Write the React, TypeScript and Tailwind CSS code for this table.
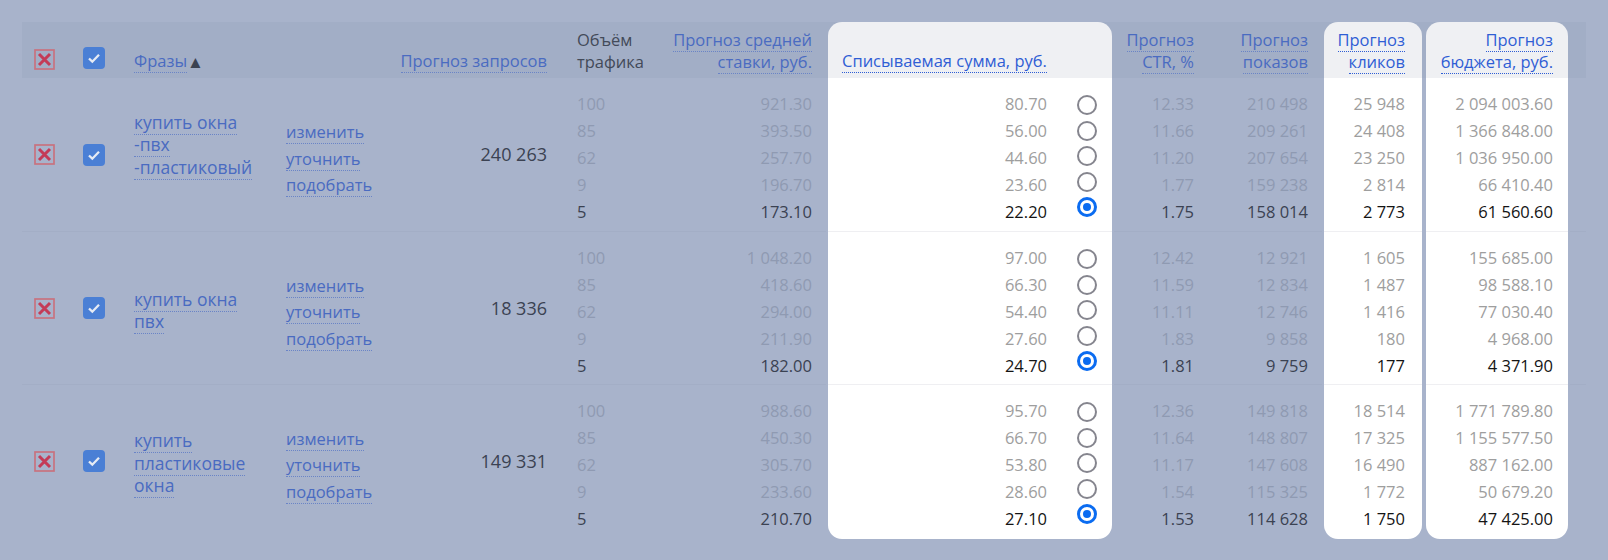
import React from "react";

const GRID =
  "grid grid-cols-[48px_52px_152px_126px_165px_75px_186px_288px_92px_116px_102px_146px_16px]";

type Row = {
  phrase: string[];
  shift: string;
  requests: string;
  bid: string[];
  charge: string[];
  ctr: string[];
  shows: string[];
  clicks: string[];
  budget: string[];
};

const volume = ["100", "85", "62", "9", "5"];

const rows: Row[] = [
  {
    phrase: ["купить окна", "-пвх", "-пластиковый"],
    shift: "pb-[20px]",
    requests: "240 263",
    bid: ["921.30", "393.50", "257.70", "196.70", "173.10"],
    charge: ["80.70", "56.00", "44.60", "23.60", "22.20"],
    ctr: ["12.33", "11.66", "11.20", "1.77", "1.75"],
    shows: ["210 498", "209 261", "207 654", "159 238", "158 014"],
    clicks: ["25 948", "24 408", "23 250", "2 814", "2 773"],
    budget: ["2 094 003.60", "1 366 848.00", "1 036 950.00", "66 410.40", "61 560.60"],
  },
  {
    phrase: ["купить окна", "пвх"],
    shift: "pt-[4px]",
    requests: "18 336",
    bid: ["1 048.20", "418.60", "294.00", "211.90", "182.00"],
    charge: ["97.00", "66.30", "54.40", "27.60", "24.70"],
    ctr: ["12.42", "11.59", "11.11", "1.83", "1.81"],
    shows: ["12 921", "12 834", "12 746", "9 858", "9 759"],
    clicks: ["1 605", "1 487", "1 416", "180", "177"],
    budget: ["155 685.00", "98 588.10", "77 030.40", "4 968.00", "4 371.90"],
  },
  {
    phrase: ["купить", "пластиковые", "окна"],
    shift: "pt-[4px]",
    requests: "149 331",
    bid: ["988.60", "450.30", "305.70", "233.60", "210.70"],
    charge: ["95.70", "66.70", "53.80", "28.60", "27.10"],
    ctr: ["12.36", "11.64", "11.17", "1.54", "1.53"],
    shows: ["149 818", "148 807", "147 608", "115 325", "114 628"],
    clicks: ["18 514", "17 325", "16 490", "1 772", "1 750"],
    budget: ["1 771 789.80", "1 155 577.50", "887 162.00", "50 679.20", "47 425.00"],
  },
];

function RemoveIcon() {
  return (
    <svg width="21" height="21" viewBox="0 0 21 21">
      <rect x="1" y="1" width="19" height="19" fill="none" stroke="#c8727f" strokeWidth="1.7" />
      <path d="M5 5L16 16M16 5L5 16" stroke="#c43b57" strokeWidth="3" />
    </svg>
  );
}

function Checkbox() {
  return (
    <div className="w-[22px] h-[22px] rounded-[4px] bg-[#4a7fd5] flex items-center justify-center">
      <svg width="16" height="16" viewBox="0 0 16 16">
        <path d="M3 8.5l3.3 3.2L13 4.8" fill="none" stroke="#e6ebf4" strokeWidth="2.3" />
      </svg>
    </div>
  );
}

function Radio({ on }: { on?: boolean }) {
  if (on) {
    return (
      <div className="w-[20px] h-[20px] rounded-full border-[3px] border-[#0b6cf1] flex items-center justify-center">
        <div className="w-[8px] h-[8px] rounded-full bg-[#0b6cf1]" />
      </div>
    );
  }
  return <div className="w-[20px] h-[20px] rounded-full border-[2.5px] border-[#85858e]" />;
}

// link with dotted underline, dimmed (under the overlay) or bright (in the panels)
function Link({ children, bright }: { children: React.ReactNode; bright?: boolean }) {
  return (
    <span
      className={
        bright
          ? "text-[#2f5ed5] border-b border-dotted border-[#2f5ed5]"
          : "text-[#4a6bc1] border-b border-dotted border-[#6a84c6]"
      }
    >
      {children}
    </span>
  );
}

function Values({ items, bright, align = "end" }: { items: string[]; bright?: boolean; align?: "start" | "end" }) {
  return (
    <div className={`flex flex-col leading-[27px] ${align === "end" ? "items-end" : "items-start"}`}>
      {items.map((v, i) => {
        const last = i === items.length - 1;
        const color = bright
          ? last
            ? "text-[#141414]"
            : "text-[#9e9e9e]"
          : last
            ? "text-[#3b4252]"
            : "text-[#8f9ab2]";
        return (
          <span key={i} className={color}>
            {v}
          </span>
        );
      })}
    </div>
  );
}

function HeaderRow() {
  return (
    <div className={`${GRID} h-[56px] bg-[#a2aec6] leading-[22px]`}>
      <div className="flex items-end pl-[12px] pb-[8px]">
        <RemoveIcon />
      </div>
      <div className="flex items-end pl-[13px] pb-[9px]">
        <Checkbox />
      </div>
      <div className="flex items-end pl-[12px] pb-[5px]">
        <Link>Фразы</Link>
        <span className="text-[#3b4251] text-[17px] leading-[22px]">▲</span>
      </div>
      <div />
      <div className="flex items-end justify-end pr-[18px] pb-[5px]">
        <Link>Прогноз запросов</Link>
      </div>
      <div className="flex items-end pl-[12px] pb-[5px] text-[#434a59]">
        Объём
        <br />
        трафика
      </div>
      <div className="flex items-end justify-end pr-[14px] pb-[5px] text-right">
        <div>
          <Link>
            Прогноз средней
            <br />
            ставки, руб.
          </Link>
        </div>
      </div>
      <div className="px-[2px]">
        <div className="h-full rounded-t-[14px] bg-[#eff0f3] flex items-end pl-[14px] pb-[5px]">
          <Link bright>Списываемая сумма, руб.</Link>
        </div>
      </div>
      <div className="flex items-end justify-end pr-[12px] pb-[5px] text-right">
        <div>
          <Link>
            Прогноз
            <br />
            CTR, %
          </Link>
        </div>
      </div>
      <div className="flex items-end justify-end pr-[14px] pb-[5px] text-right">
        <div>
          <Link>
            Прогноз
            <br />
            показов
          </Link>
        </div>
      </div>
      <div className="px-[2px]">
        <div className="h-full rounded-t-[14px] bg-[#eff0f3] flex items-end justify-end pr-[17px] pb-[5px] text-right">
          <div>
            <Link bright>
              Прогноз
              <br />
              кликов
            </Link>
          </div>
        </div>
      </div>
      <div className="px-[2px]">
        <div className="h-full rounded-t-[14px] bg-[#eff0f3] flex items-end justify-end pr-[15px] pb-[5px] text-right">
          <div>
            <Link bright>
              Прогноз
              <br />
              бюджета, руб.
            </Link>
          </div>
        </div>
      </div>
      <div />
    </div>
  );
}

function BodyRow({ row, first, last }: { row: Row; first: boolean; last: boolean }) {
  const line = first ? "" : "border-t border-[#a3aec6]";
  const panel = `bg-white ${first ? "" : "border-t border-[#efeff2]"} ${
    last ? "h-[155px] rounded-b-[14px]" : "h-full"
  }`;
  return (
    <div className={`${GRID} grid-rows-[153px]`}>
      <div className={`${line} flex items-center pl-[12px]`}>
        <RemoveIcon />
      </div>
      <div className={`${line} flex items-center pl-[13px]`}>
        <Checkbox />
      </div>
      <div className={`${line} flex items-center pl-[12px] ${row.shift}`}>
        <div className="leading-[22.5px] text-[17.5px] font-medium">
          {row.phrase.map((p) => (
            <div key={p}>
              <Link>{p}</Link>
            </div>
          ))}
        </div>
      </div>
      <div className={`${line} flex items-center pl-[12px] pt-[9px]`}>
        <div className="flex flex-col leading-[26.5px]">
          <div>
            <Link>изменить</Link>
          </div>
          <div>
            <Link>уточнить</Link>
          </div>
          <div>
            <Link>подобрать</Link>
          </div>
        </div>
      </div>
      <div className={`${line} flex items-center justify-end pr-[18px] text-[18px] text-[#3b4252]`}>
        {row.requests}
      </div>
      <div className={`${line} pl-[12px] pt-[12px]`}>
        <Values items={volume} align="start" />
      </div>
      <div className={`${line} pr-[14px] pt-[12px]`}>
        <Values items={row.bid} />
      </div>
      <div className="px-[2px]">
        <div className={`${panel} flex justify-end pr-[15px] pt-[12px]`}>
          <Values items={row.charge} bright />
          <div className="ml-[30px] pt-[5px] flex flex-col gap-[5.5px]">
            <Radio />
            <Radio />
            <Radio />
            <Radio />
            <Radio on />
          </div>
        </div>
      </div>
      <div className={`${line} pr-[12px] pt-[12px] flex justify-end`}>
        <Values items={row.ctr} />
      </div>
      <div className={`${line} pr-[14px] pt-[12px] flex justify-end`}>
        <Values items={row.shows} />
      </div>
      <div className="px-[2px]">
        <div className={`${panel} flex justify-end pr-[17px] pt-[12px]`}>
          <Values items={row.clicks} bright />
        </div>
      </div>
      <div className="px-[2px]">
        <div className={`${panel} flex justify-end pr-[15px] pt-[12px]`}>
          <Values items={row.budget} bright />
        </div>
      </div>
      <div className={line} />
    </div>
  );
}

export default function App() {
  return (
    <div className="w-full h-[560px] bg-[#a8b3cb] pt-[22px] pl-[22px] font-['Open_Sans',sans-serif] text-[16.5px] overflow-hidden">
      <div className="w-[1564px]">
        <HeaderRow />
        {rows.map((r, i) => (
          <BodyRow key={i} row={r} first={i === 0} last={i === rows.length - 1} />
        ))}
      </div>
    </div>
  );
}
